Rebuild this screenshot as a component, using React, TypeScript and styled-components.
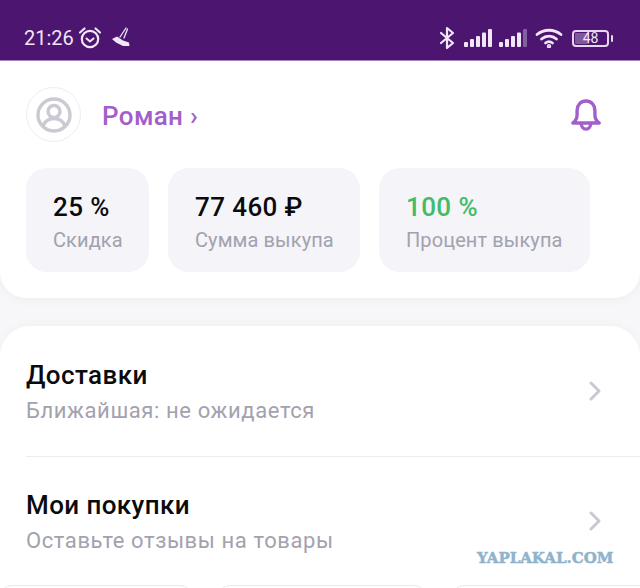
import React from 'react';
import styled, { createGlobalStyle } from 'styled-components';

const GlobalStyle = createGlobalStyle`
  html, body {
    margin: 0;
    padding: 0;
    background: #f7f7f9;
    font-family: Roboto, "Liberation Sans", sans-serif;
  }
`;

const Screen = styled.div`
  position: relative;
  width: 640px;
  height: 588px;
  overflow: hidden;
  background: #f7f7f9;
`;

const StatusBar = styled.div`
  height: 61px;
  padding: 16px 31px 0 24px;
  background: #4b1570;
  border-bottom: 1px solid #a983c0;
  box-sizing: border-box;
  display: flex;
  align-items: center;
  justify-content: space-between;
  color: #f1e6f6;
`;

const StatusGroup = styled.div`
  display: flex;
  align-items: center;
`;

const Clock = styled.span`
  font-size: 20px;
  line-height: 24px;
  margin-right: 4px;
`;

const BatteryText = styled.span`
  position: absolute;
  left: 0;
  right: 0;
  top: -2px;
  text-align: center;
  font-size: 14px;
  line-height: 17px;
  color: #f1e6f6;
`;

const Battery = styled.div`
  position: relative;
  width: 37px;
  height: 17px;
  margin-left: 9px;
  box-sizing: border-box;
  border: 2px solid #e6d6ee;
  border-radius: 4px;
  &::before {
    content: '';
    position: absolute;
    left: 1px;
    top: 1px;
    bottom: 1px;
    width: 14px;
    background: #7d5a9c;
    border-radius: 1px;
  }
  &::after {
    content: '';
    position: absolute;
    right: -6px;
    top: 3px;
    width: 2px;
    height: 7px;
    background: #e6d6ee;
    border-radius: 1px;
  }
`;

const ProfileCard = styled.section`
  background: #fff;
  height: 237px;
  box-sizing: border-box;
  padding: 26px 0 0 26px;
  border-radius: 0 0 26px 26px;
  box-shadow: 0 2px 12px rgba(30, 20, 50, 0.04);
`;

const ProfileRow = styled.div`
  display: flex;
  align-items: center;
  padding-right: 39px;
`;

const Avatar = styled.div`
  width: 55px;
  height: 55px;
  box-sizing: border-box;
  border: 1.5px solid #ecedf0;
  border-radius: 50%;
  display: flex;
  align-items: center;
  justify-content: center;
`;

const UserName = styled.div`
  margin: 2px 0 0 21px;
  font-size: 26px;
  font-weight: 500;
  letter-spacing: 0.35px;
  color: #a25fcb;
  flex: 1;
`;

const Stats = styled.div`
  display: flex;
  gap: 19px;
  margin-top: 26px;
`;

const StatCard = styled.div<{ $width: number }>`
  width: ${(p) => p.$width}px;
  height: 104px;
  box-sizing: border-box;
  padding: 24px 0 0 27px;
  background: #f4f4f9;
  border-radius: 21px;
`;

const StatValue = styled.div<{ $green?: boolean }>`
  font-size: 26px;
  line-height: 30px;
  font-weight: 500;
  letter-spacing: 0.4px;
  color: ${(p) => (p.$green ? '#43bb68' : '#0b0b0d')};
`;

const StatLabel = styled.div`
  margin-top: 6px;
  font-size: 20px;
  line-height: 24px;
  letter-spacing: 0.1px;
  color: #a2a2ae;
`;

const ListCard = styled.section`
  margin-top: 28px;
  background: #fff;
  height: 270px;
  border-radius: 30px 30px 0 0;
  box-shadow: 0 -1px 10px rgba(30, 20, 50, 0.03);
  padding-left: 26px;
`;

const ListRow = styled.div<{ $divided?: boolean }>`
  height: 130px;
  box-sizing: border-box;
  padding-top: 33px;
  padding-right: 39px;
  display: flex;
  align-items: flex-start;
  justify-content: space-between;
  box-shadow: ${(p) => (p.$divided ? '0 1px 0 #ececf0' : 'none')};
`;

const RowTitle = styled.div`
  font-size: 26px;
  line-height: 32px;
  font-weight: 500;
  letter-spacing: 0.4px;
  color: #0b0b0d;
`;

const RowSub = styled.div`
  margin-top: 6px;
  font-size: 22px;
  line-height: 28px;
  letter-spacing: 0.6px;
  color: #a2a2ae;
`;

const Chevron = styled.svg`
  margin-top: 22px;
`;

const BottomChips = styled.div`
  position: absolute;
  left: 0;
  top: 585px;
  display: flex;
  gap: 26px;
`;

const Chip = styled.div<{ $width: number }>`
  width: ${(p) => p.$width}px;
  height: 30px;
  box-sizing: border-box;
  border: 1px solid #e9e9ed;
  border-radius: 12px;
  background: #fff;
`;

const Watermark = styled.div`
  position: absolute;
  left: 477px;
  top: 549px;
  font-family: "DejaVu Serif", serif;
  font-size: 15px;
  line-height: 18px;
  font-weight: 700;
  color: #8fb3cc;
  -webkit-text-stroke: 0.5px #8fb3cc;
`;

const Signal: React.FC<{ weak?: boolean; gap: number }> = ({ weak, gap }) => (
  <svg width="28" height="18" viewBox="0 0 28 18" fill="#f1e6f6" style={{ marginLeft: gap }}>
    <rect x="0" y="13" width="4" height="5" rx="1" />
    <rect x="6" y="10" width="4" height="8" rx="1" />
    <rect x="12" y="7" width="4" height="11" rx="1" />
    <rect x="18" y="3.5" width="4" height="14.500" rx="1" />
    <rect x="24" y="0" width="4" height="18" rx="1" fill={weak ? '#80609d' : '#f1e6f6'} />
  </svg>
);

const RowChevron: React.FC = () => (
  <Chevron width="12" height="20" viewBox="0 0 12 20" fill="none" stroke="#c9cad0" strokeWidth="3" strokeLinecap="round" strokeLinejoin="round">
    <path d="M2 2l8 8-8 8" />
  </Chevron>
);

const App: React.FC = () => {
  return (
    <Screen>
      <GlobalStyle />
      <StatusBar>
        <StatusGroup>
          <Clock>21:26</Clock>
          <svg width="24" height="24" viewBox="0 0 24 24" fill="none" stroke="#f1e6f6" strokeLinecap="round" strokeLinejoin="round">
            <circle cx="12" cy="13" r="8.2" strokeWidth="2.2" />
            <path d="M8.500 12.500l3.500 3 3.500-3" strokeWidth="2" />
            <path d="M2 6.500L6.500 2.500M22 6.500L17.500 2.500" strokeWidth="2.2" />
          </svg>
          <svg width="20" height="22" viewBox="0 0 20 22" fill="none" style={{ marginLeft: 9 }}>
            <path d="M9 10L15 1M13 11L16.500 2" stroke="#f1e6f6" strokeWidth="1.3" strokeLinecap="round" />
            <path d="M1 12L6 9.500l6 4 6 2 .5 3.500-6.500 0-7-3.500z" fill="#f1e6f6" />
          </svg>
        </StatusGroup>
        <StatusGroup>
          <svg width="16" height="24" viewBox="0 0 16 24" fill="none" stroke="#f1e6f6" strokeWidth="2.2" strokeLinejoin="round" strokeLinecap="round">
            <path d="M2 7l12 10-6 5V2l6 5L2 17" />
          </svg>
          <Signal gap={9} />
          <Signal gap={7} weak />
          <svg width="28" height="20" viewBox="0 0 28 20" fill="none" stroke="#f1e6f6" strokeWidth="2.8" strokeLinecap="round" style={{ marginLeft: 8 }}>
            <path d="M2 6.500C9 .8 19 .8 26 6.500" />
            <path d="M6.500 11C11 7.200 17 7.200 21.500 11" />
            <path d="M10.500 15c2-1.500 5-1.500 7 0" />
            <circle cx="14" cy="18.200" r="0.8" fill="#f1e6f6" />
          </svg>
          <Battery>
            <BatteryText>48</BatteryText>
          </Battery>
        </StatusGroup>
      </StatusBar>

      <ProfileCard>
        <ProfileRow>
          <Avatar>
            <svg width="36" height="36" viewBox="0 0 36 36" fill="none" stroke="#c9cad2" strokeWidth="3.4">
              <circle cx="18" cy="18" r="16" />
              <circle cx="18" cy="14.500" r="6" />
              <path d="M7 29c2-5 6-7.500 11-7.500s9 2.500 11 7.500" />
            </svg>
          </Avatar>
          <UserName>Роман ›</UserName>
          <svg width="30" height="34" viewBox="0 0 32 34" fill="none" stroke="#a25fcb" strokeWidth="3.6" strokeLinecap="round" strokeLinejoin="round">
            <path d="M2 25.500c3-2 4.500-4 4.500-9V12C6.500 6.500 10.500 2 16 2s9.500 4.500 9.500 10v4.500c0 5 1.500 7 4.500 9z" />
            <path d="M11 26c0 3.500 2 6 5 6s5-2.500 5-6" />
          </svg>
        </ProfileRow>
        <Stats>
          <StatCard $width={123}>
            <StatValue>25 %</StatValue>
            <StatLabel>Скидка</StatLabel>
          </StatCard>
          <StatCard $width={192}>
            <StatValue>77 460 ₽</StatValue>
            <StatLabel>Сумма выкупа</StatLabel>
          </StatCard>
          <StatCard $width={211}>
            <StatValue $green>100 %</StatValue>
            <StatLabel>Процент выкупа</StatLabel>
          </StatCard>
        </Stats>
      </ProfileCard>

      <ListCard>
        <ListRow $divided>
          <div>
            <RowTitle>Доставки</RowTitle>
            <RowSub>Ближайшая: не ожидается</RowSub>
          </div>
          <RowChevron />
        </ListRow>
        <ListRow>
          <div>
            <RowTitle>Мои покупки</RowTitle>
            <RowSub>Оставьте отзывы на товары</RowSub>
          </div>
          <RowChevron />
        </ListRow>
      </ListCard>

      <BottomChips>
        <Chip $width={192} />
        <Chip $width={208} />
        <Chip $width={200} />
      </BottomChips>
      <Watermark>YAPLAKAL.COM</Watermark>
    </Screen>
  );
};

export default App;
